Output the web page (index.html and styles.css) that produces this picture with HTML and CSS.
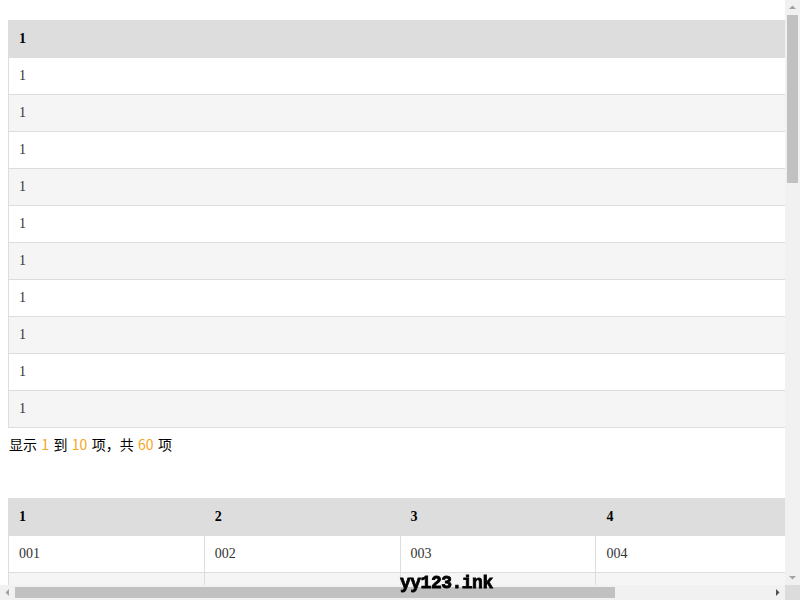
FILE: index.html
```html
<!DOCTYPE html>
<html lang="zh">
<head>
<meta charset="utf-8">
<title>表格</title>
<link rel="stylesheet" href="styles.css">
</head>
<body>
<table class="grid">
  <thead><tr><th>1</th></tr></thead>
  <tbody>
    <tr><td>1</td></tr><tr><td>1</td></tr><tr><td>1</td></tr><tr><td>1</td></tr><tr><td>1</td></tr>
    <tr><td>1</td></tr><tr><td>1</td></tr><tr><td>1</td></tr><tr><td>1</td></tr><tr><td>1</td></tr>
  </tbody>
</table>
<div class="info">显示 <span class="num">1</span> 到 <span class="num">10</span> 项，共 <span class="num">60</span> 项</div>
<table class="grid grid-cols">
  <thead><tr><th>1</th><th>2</th><th>3</th><th>4</th><th>5</th></tr></thead>
  <tbody id="rows">
    <tr><td>001</td><td>002</td><td>003</td><td>004</td><td>005</td></tr>
  </tbody>
</table>

<div class="vbar">
  <div class="sbtn"><svg width="15" height="15" viewBox="0 0 15 15"><polygon points="4,9 11,9 7.5,5.5" fill="#a3a3a3"/></svg></div>
  <div class="vtrack"><div class="vthumb"></div></div>
  <div class="sbtn"><svg width="15" height="15" viewBox="0 0 15 15"><polygon points="4,6 11,6 7.5,9.5" fill="#a3a3a3"/></svg></div>
</div>
<div class="hbar">
  <div class="sbtn"><svg width="15" height="15" viewBox="0 0 15 15"><polygon points="9,4 9,11 5.5,7.5" fill="#a3a3a3"/></svg></div>
  <div class="htrack"><div class="hthumb"></div></div>
  <div class="sbtn"><svg width="15" height="15" viewBox="0 0 15 15"><polygon points="6,4 6,11 9.5,7.5" fill="#505050"/></svg></div>
</div>
<div class="corner"></div>
<div class="mark">yy123.ink</div>

<script>
  var tb = document.getElementById('rows');
  var n = 6;
  for (var r = 1; r < 37; r++) {
    var tr = document.createElement('tr');
    for (var c = 0; c < 5; c++) {
      var td = document.createElement('td');
      td.textContent = String(n).padStart(3, '0');
      n++;
      tr.appendChild(td);
    }
    tb.appendChild(tr);
  }
</script>
</body>
</html>
```
FILE: styles.css
```css
html, body {
  background: #fff;
}
html {
  overflow: hidden;
}
body {
  margin: 8px;
  font-family: "Liberation Serif", "Noto Sans CJK SC", serif;
  font-size: 14px;
  color: #000;
}
.grid {
  width: 980px;
  border-collapse: collapse;
  border-spacing: 0;
  margin: 12px 0 0;
  table-layout: fixed;
}
.grid th,
.grid td {
  border: 1px solid #ddd;
  padding: 8px 10px;
  line-height: 20px;
  text-align: left;
  color: #333;
}
.grid th {
  background: #ddd;
  font-weight: bold;
  color: #000;
}
.grid tbody tr:nth-child(odd) td {
  background: #fff;
}
.grid tbody tr:nth-child(even) td {
  background: #f5f5f5;
}
.grid-cols {
  margin: 0 0 20px;
}
.info {
  font-family: "Noto Sans CJK SC", sans-serif;
  font-size: 14px;
  line-height: 20px;
  word-spacing: 1.2px;
  padding: 6px 0 0 1px;
  height: 64px;
  color: #000;
}
.num {
  color: #f5a623;
}
.mark {
  position: fixed;
  left: 400px;
  bottom: 8px;
  font-family: "Liberation Mono", monospace;
  font-weight: bold;
  font-size: 18px;
  line-height: 18px;
  color: #000;
  letter-spacing: -0.5px;
  -webkit-text-stroke: 0.8px #000;
  z-index: 3;
}

/* fake window scrollbars (overlay) */
.vbar {
  position: fixed;
  top: 0;
  right: 0;
  width: 15px;
  height: 585px;
  background: #f1f1f1;
  display: flex;
  flex-direction: column;
  z-index: 2;
}
.hbar {
  position: fixed;
  left: 0;
  bottom: 0;
  width: 785px;
  height: 15px;
  background: #f1f1f1;
  display: flex;
  flex-direction: row;
  z-index: 2;
}
.corner {
  position: fixed;
  right: 0;
  bottom: 0;
  width: 15px;
  height: 15px;
  background: #dcdcdc;
  z-index: 2;
}
.sbtn {
  width: 15px;
  height: 15px;
  flex: none;
}
.sbtn svg {
  display: block;
}
.vtrack {
  flex: 1;
  padding: 0 2px;
}
.vthumb {
  height: 168px;
  background: #c1c1c1;
}
.htrack {
  flex: 1;
  padding: 2px 0;
}
.hthumb {
  width: 600px;
  height: 100%;
  background: #c1c1c1;
}
```
